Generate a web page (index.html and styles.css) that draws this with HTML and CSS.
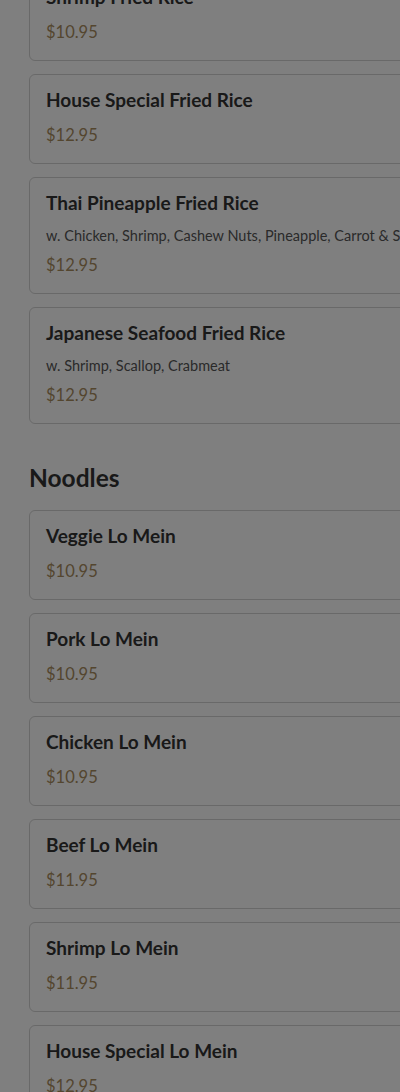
FILE: index.html
```html
<!DOCTYPE html>
<html lang="en">
<head>
  <meta charset="UTF-8" />
  <title>Menu</title>
  <link rel="stylesheet" href="styles.css">
</head>
<body>
  <div class="menu">
    <section class="section first">
      <div class="item">
        <h3 class="name">Shrimp Fried Rice</h3>
        <div class="price">$10.95</div>
      </div>
      <div class="item">
        <h3 class="name">House Special Fried Rice</h3>
        <div class="price">$12.95</div>
      </div>
      <div class="item">
        <h3 class="name">Thai Pineapple Fried Rice</h3>
        <p class="desc">w. Chicken, Shrimp, Cashew Nuts, Pineapple, Carrot &amp; Scallion</p>
        <div class="price">$12.95</div>
      </div>
      <div class="item">
        <h3 class="name">Japanese Seafood Fried Rice</h3>
        <p class="desc">w. Shrimp, Scallop, Crabmeat</p>
        <div class="price">$12.95</div>
      </div>
    </section>

    <section class="section">
      <h2 class="section-title">Noodles</h2>
      <div class="item">
        <h3 class="name">Veggie Lo Mein</h3>
        <div class="price">$10.95</div>
      </div>
      <div class="item">
        <h3 class="name">Pork Lo Mein</h3>
        <div class="price">$10.95</div>
      </div>
      <div class="item">
        <h3 class="name">Chicken Lo Mein</h3>
        <div class="price">$10.95</div>
      </div>
      <div class="item">
        <h3 class="name">Beef Lo Mein</h3>
        <div class="price">$11.95</div>
      </div>
      <div class="item">
        <h3 class="name">Shrimp Lo Mein</h3>
        <div class="price">$11.95</div>
      </div>
      <div class="item">
        <h3 class="name">House Special Lo Mein</h3>
        <div class="price">$12.95</div>
      </div>
    </section>
  </div>

  <div class="backdrop"></div>
</body>
</html>
```

FILE: styles.css
```css
html, body {
  overflow: hidden;
}

body {
  margin: 0;
  font-family: Lato, "Open Sans", sans-serif;
  color: #333;
  background-color: #fff;
}

.menu {
  width: 420px;
  padding: 0 0 0 29px;
}

.section {
  margin-top: 39px;
}

.section.first {
  margin-top: -29px;
}

.section-title {
  margin: 0 0 17px;
  font-size: 24.5px;
  line-height: 30px;
  font-weight: 700;
  color: #333;
}

.item {
  border: 1px solid #d2d2d2;
  border-radius: 6px;
  padding: 14px 16px 16px;
  margin-bottom: 13px;
  background-color: #fff;
}

.name {
  margin: 0 0 12px;
  font-size: 19px;
  line-height: 22px;
  font-weight: 700;
  color: #333;
}

.desc {
  margin: 0 0 7px;
  font-size: 14.5px;
  line-height: 20px;
  color: #555;
  white-space: nowrap;
}

.price {
  font-size: 16.5px;
  line-height: 24px;
  color: #a88c5e;
}

.backdrop {
  position: fixed;
  inset: 0;
  background-color: rgba(0, 0, 0, 0.5);
}
```
